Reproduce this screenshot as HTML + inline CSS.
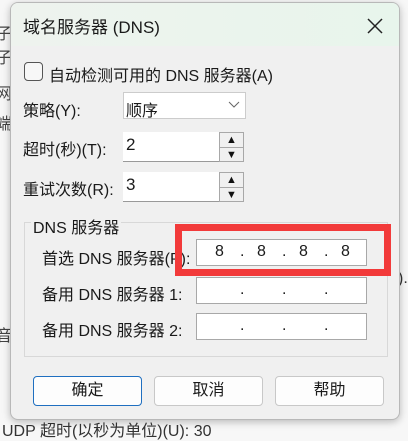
<!DOCTYPE html><html><head><meta charset="utf-8"><style>
body{margin:0;width:408px;height:429px;overflow:hidden;background:#f7f7f7;font-family:"Liberation Sans","Noto Sans CJK SC",sans-serif;position:relative;color:#1a1a1a}
.a{position:absolute;white-space:nowrap}
.dlg{position:absolute;left:10px;top:2px;width:388px;height:416px;background:#f0f0f0;border:1px solid #b8b8b8;border-radius:8px;box-shadow:0 2px 8px rgba(0,0,0,.25);overflow:hidden}
.tb{position:absolute;left:0;top:0;width:100%;height:43px;background:linear-gradient(90deg,#eef3ee,#e8f5ec)}
.in{position:absolute;background:#fff;border:1px solid #a8a8a8;box-sizing:border-box}
.sp{position:absolute;width:25px;height:30px;border:1px solid #a8a8a8;box-sizing:border-box;background:#f0f0f0}
.sp div{height:14px;border-bottom:1px solid #a8a8a8;font-size:11px;text-align:center;line-height:14px;color:#111}
.btn{position:absolute;top:373px;width:109px;height:30px;border:1px solid #c8c8c8;border-radius:4px;background:#fdfdfd;box-sizing:border-box;text-align:center;line-height:28px;font-size:16px}
.l{font-size:16px}
.d{position:absolute;font-size:16px}
</style></head><body>
<div class="a l" style="left:-4px;top:20px;color:#444">子网</div>
<div class="a l" style="left:-4px;top:44px;color:#444">子网</div>
<div class="a l" style="left:-4px;top:80px;color:#444">网关</div>
<div class="a l" style="left:-4px;top:110px;color:#444">端</div>
<div class="a l" style="left:-4px;top:322px;color:#444">音</div>
<div class="a l" style="left:2px;top:417px;color:#333">UDP 超时(以秒为单位)(U): 30</div>
<div class="a l" style="left:398px;top:270px;color:#333">).</div>
<div class="dlg">
<div class="tb"></div>
<div class="a" style="left:12px;top:10px;font-size:17px">域名服务器 (DNS)</div>
<svg class="a" style="left:356px;top:15px" width="16" height="16"><path d="M1 1L15 15M15 1L1 15" stroke="#222" stroke-width="1.5"/></svg>
<div class="a" style="left:13px;top:59px;width:17px;height:17px;border:1px solid #555;border-radius:4px;background:#f7f7f7"></div>
<div class="a l" style="left:38px;top:59px">自动检测可用的 DNS 服务器(A)</div>
<div class="a l" style="left:12px;top:94px">策略(Y):</div>
<div class="in" style="left:112px;top:89px;width:123px;height:27px;border-color:#ccc"></div>
<div class="a l" style="left:115px;top:94px">顺序</div>
<svg class="a" style="left:217px;top:98px" width="12" height="8"><path d="M1 1L6 6L11 1" stroke="#666" fill="none"/></svg>
<div class="a l" style="left:12px;top:133px">超时(秒)(T):</div>
<div class="in" style="left:112px;top:129px;width:97px;height:30px;border:none;border-bottom:1px solid #999"></div>
<div class="a l" style="left:115px;top:132px;font-size:17px">2</div>
<div class="sp" style="left:208px;top:129px"><div>▲</div><div style="border:none">▼</div></div>
<div class="a l" style="left:12px;top:173px">重试次数(R):</div>
<div class="in" style="left:112px;top:169px;width:97px;height:30px;border:none;border-bottom:1px solid #999"></div>
<div class="a l" style="left:115px;top:172px;font-size:17px">3</div>
<div class="sp" style="left:208px;top:169px"><div>▲</div><div style="border:none">▼</div></div>
<div class="a" style="left:13px;top:219px;width:362px;height:133px;border:1px solid #d8d8d8"></div>
<div class="a l" style="left:20px;top:211px;background:#f0f0f0;padding:0 2px">DNS 服务器</div>
<div class="a l" style="left:31px;top:242px">首选 DNS 服务器(P):</div>
<div class="in" style="left:185px;top:236px;width:171px;height:27px"></div>
<div class="d" style="left:204px;top:240px">8</div><div class="d" style="left:229px;top:240px">.</div>
<div class="d" style="left:246px;top:240px">8</div><div class="d" style="left:271px;top:240px">.</div>
<div class="d" style="left:288px;top:240px">8</div><div class="d" style="left:313px;top:240px">.</div>
<div class="d" style="left:330px;top:240px">8</div>
<div class="a l" style="left:31px;top:278px">备用 DNS 服务器 1:</div>
<div class="in" style="left:185px;top:274px;width:171px;height:27px"></div>
<div class="d" style="left:229px;top:278px">.</div><div class="d" style="left:271px;top:278px">.</div><div class="d" style="left:313px;top:278px">.</div>
<div class="a l" style="left:31px;top:314px">备用 DNS 服务器 2:</div>
<div class="in" style="left:185px;top:310px;width:171px;height:27px"></div>
<div class="d" style="left:229px;top:314px">.</div><div class="d" style="left:271px;top:314px">.</div><div class="d" style="left:313px;top:314px">.</div>
<div class="btn" style="left:22px;border:1px solid #1f6fc0">确定</div>
<div class="btn" style="left:143px">取消</div>
<div class="btn" style="left:264px">帮助</div>
</div>
<div class="a" style="left:175px;top:224px;width:202px;height:38px;border:7px solid #f23a3a"></div>
</body></html>
